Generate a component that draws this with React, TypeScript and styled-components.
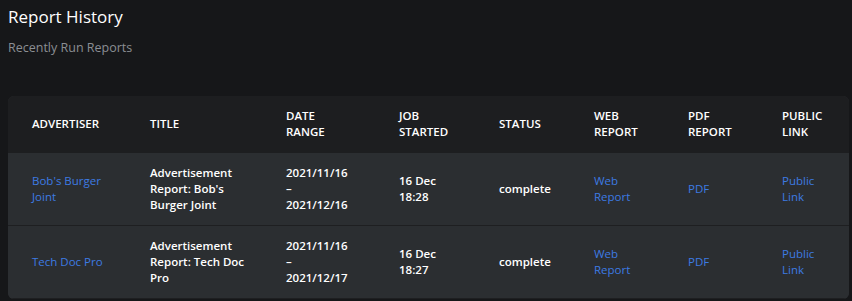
import React from 'react';
import styled, { createGlobalStyle } from 'styled-components';

const GlobalStyle = createGlobalStyle`
  html, body {
    margin: 0;
    padding: 0;
    background-color: #161719;
  }
  body {
    font-family: "Open Sans", "Liberation Sans", sans-serif;
    color: #ffffff;
  }
`;

const Page = styled.main`
  padding: 6px 3px 0 8px;
`;

const Heading = styled.h1`
  margin: 0;
  font-size: 17px;
  font-weight: 500;
  line-height: 22px;
  color: #ffffff;
`;

const SubHeading = styled.p`
  margin: 11px 0 0;
  font-size: 12.5px;
  line-height: 18px;
  color: #8b8e93;
`;

const columns = '118px 136px 113px 100px 95px 94px 94px 91px';

const TableCard = styled.section`
  margin-top: 39px;
  width: 841px;
  border-radius: 6px;
  overflow: hidden;
  background-color: #2b2e31;
`;

const Row = styled.div<{ $head?: boolean }>`
  display: grid;
  grid-template-columns: ${columns};
  align-items: center;
  background-color: ${p => (p.$head ? '#1d1e20' : '#2b2e31')};
  border-bottom: ${p => (p.$head ? 'none' : '1px solid #1e1f21')};
`;

const Cell = styled.div<{ $head?: boolean }>`
  padding: ${p => (p.$head ? '12px 24px 13px' : '12px 16px 12px 24px')};
  font-size: 11.5px;
  line-height: 16px;
  font-weight: ${p => (p.$head ? 600 : 550)};
  text-transform: ${p => (p.$head ? 'uppercase' : 'none')};
  color: #ffffff;
`;

const Line = styled.span`
  display: block;
`;

const Link = styled.a`
  color: #3d7be3;
  font-weight: 500;
  text-decoration: none;
`;

const headers = ['Advertiser', 'Title', 'Date Range', 'Job Started', 'Status', 'Web Report', 'PDF Report', 'Public Link'];

const reports = [
  { advertiser: "Bob's Burger Joint", title: "Advertisement Report: Bob's Burger Joint", from: '2021/11/16', to: '2021/12/16', started: '16 Dec 18:28', status: 'complete' },
  { advertiser: 'Tech Doc Pro', title: 'Advertisement Report: Tech Doc Pro', from: '2021/11/16', to: '2021/12/17', started: '16 Dec 18:27', status: 'complete' },
];

export default function App() {
  return (
    <>
      <GlobalStyle />
      <Page>
        <Heading>Report History</Heading>
        <SubHeading>Recently Run Reports</SubHeading>
        <TableCard>
          <Row $head>
            {headers.map(h => (
              <Cell $head key={h}>{h}</Cell>
            ))}
          </Row>
          {reports.map(r => (
            <Row key={r.advertiser}>
              <Cell><Link href="#">{r.advertiser}</Link></Cell>
              <Cell>{r.title}</Cell>
              <Cell>
                <Line>{r.from}</Line>
                <Line>–</Line>
                <Line>{r.to}</Line>
              </Cell>
              <Cell>{r.started}</Cell>
              <Cell>{r.status}</Cell>
              <Cell><Link href="#">Web Report</Link></Cell>
              <Cell><Link href="#">PDF</Link></Cell>
              <Cell><Link href="#">Public Link</Link></Cell>
            </Row>
          ))}
        </TableCard>
      </Page>
    </>
  );
}
